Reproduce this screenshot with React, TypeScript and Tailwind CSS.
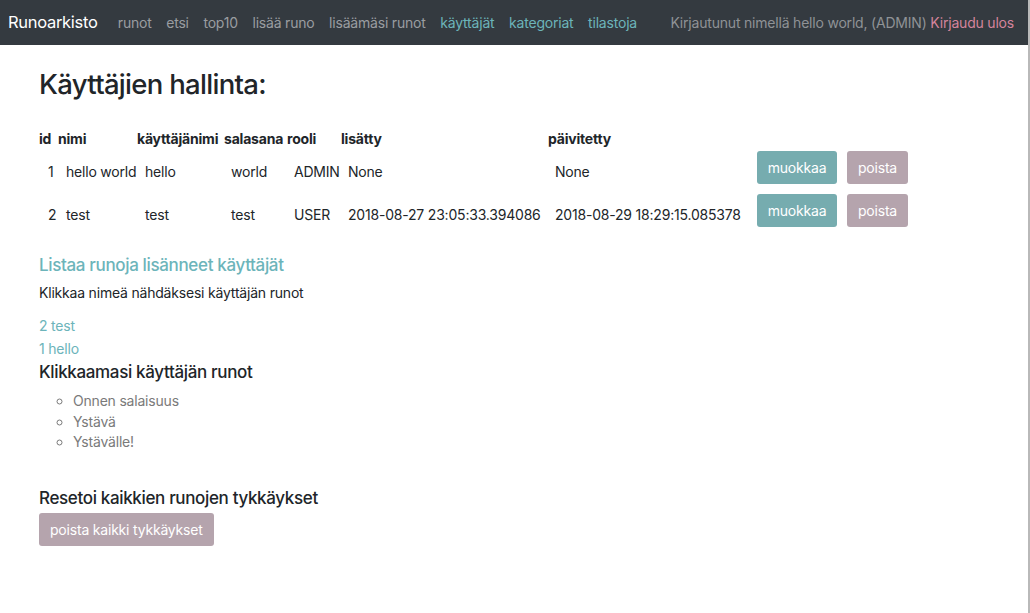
const NAV = [
  { label: "runot", teal: false },
  { label: "etsi", teal: false },
  { label: "top10", teal: false },
  { label: "lisää runo", teal: false },
  { label: "lisäämäsi runot", teal: false },
  { label: "käyttäjät", teal: true },
  { label: "kategoriat", teal: true },
  { label: "tilastoja", teal: true },
];

const USERS = [
  { id: 1, name: "hello world", username: "hello", password: "world", role: "ADMIN", added: "None", updated: "None" },
  { id: 2, name: "test", username: "test", password: "test", role: "USER", added: "2018-08-27 23:05:33.394086", updated: "2018-08-29 18:29:15.085378" },
];

const COLS = "grid grid-cols-[19px_79px_87px_63px_54px_207px_202px_90px_80px]";

export default function App() {
  return (
    <div className="flex min-h-screen bg-white text-[#212529] tracking-[-0.2px]" style={{ fontFamily: "Inter, 'Liberation Sans', sans-serif" }}>
      <div className="flex-1">
        {/* navbar */}
        <nav className="h-[45px] bg-[#343a40] flex items-center pl-[8px] pr-[14px] whitespace-nowrap">
          <span className="text-[16.5px] text-white mr-[13px] -mt-[1px] tracking-[-0.3px]">Runoarkisto</span>
          <div className="flex items-center">
            {NAV.map((n) => (
              <a key={n.label} className={`text-[14px] px-[7.3px] ${n.teal ? "text-[#6cb4ba]" : "text-[#9a9da1]"}`}>
                {n.label}
              </a>
            ))}
          </div>
          <div className="ml-auto text-[14px] -mt-[1px]">
            <span className="text-[#8f9296]">Kirjautunut nimellä hello world, (ADMIN) </span>
            <a className="text-[#d4849c]">Kirjaudu ulos</a>
          </div>
        </nav>

        <main className="pl-[39px] pt-[23px]">
          <h1 className="text-[27.5px] font-medium leading-[1.2] tracking-[-0.7px]">Käyttäjien hallinta:</h1>

          {/* users table */}
          <div className="mt-[26px] text-[14px]">
            <div className={`${COLS} font-bold h-[22px] items-center`}>
              <span>id</span>
              <span>nimi</span>
              <span>käyttäjänimi</span>
              <span>salasana</span>
              <span>rooli</span>
              <span>lisätty</span>
              <span>päivitetty</span>
            </div>
            {USERS.map((u, i) => (
              <div key={u.id} className={`${COLS} ${i === 0 ? "mt-[2px]" : "mt-[10px]"} h-[33px]`}>
                <span className="pl-[9px] pt-[10px]">{u.id}</span>
                <span className="pl-[8px] pt-[10px] whitespace-nowrap">{u.name}</span>
                <span className="pl-[8px] pt-[10px]">{u.username}</span>
                <span className="pl-[7px] pt-[10px]">{u.password}</span>
                <span className="pl-[7px] pt-[10px]">{u.role}</span>
                <span className="pl-[7px] pt-[10px] whitespace-nowrap">{u.added}</span>
                <span className="pl-[7px] pt-[10px] whitespace-nowrap">{u.updated}</span>
                <div className="pl-[7px]">
                  <button className="w-[80px] h-[33px] rounded-[3px] bg-[#76acaf] text-white text-[14px]">muokkaa</button>
                </div>
                <div className="pl-[7px]">
                  <button className="w-[61px] h-[33px] rounded-[3px] bg-[#b5a4ad] text-white text-[14px]">poista</button>
                </div>
              </div>
            ))}
          </div>

          <h5 className="mt-[28px] text-[17px] font-medium text-[#6cb4ba] leading-[21px] tracking-[-0.35px]">Listaa runoja lisänneet käyttäjät</h5>
          <p className="mt-[6px] text-[14px]">Klikkaa nimeä nähdäksesi käyttäjän runot</p>
          <div className="mt-[12px] flex flex-col gap-[2px] text-[14px] text-[#6cb4ba]">
            <a>2 test</a>
            <a>1 hello</a>
          </div>
          <h5 className="mt-[3px] text-[17px] font-medium leading-[21px] tracking-[-0.35px]">Klikkaamasi käyttäjän runot</h5>
          <ul className="mt-[8px] pl-[34px] list-[circle] text-[14px] text-[#7a7a7a] leading-[20.5px]">
            <li>Onnen salaisuus</li>
            <li>Ystävä</li>
            <li>Ystävälle!</li>
          </ul>

          <h5 className="mt-[35px] text-[17px] font-medium leading-[21px] tracking-[-0.35px]">Resetoi kaikkien runojen tykkäykset</h5>
          <button className="mt-[4px] h-[33px] px-[11px] rounded-[3px] bg-[#b5a4ad] text-white text-[14px]">poista kaikki tykkäykset</button>
        </main>
      </div>
      <div className="w-[2px] bg-[#b9b9b9]" />
    </div>
  );
}
